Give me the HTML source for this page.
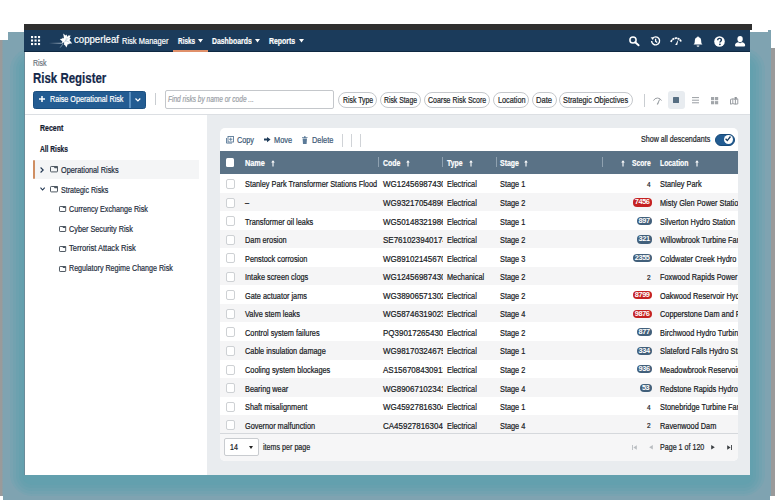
<!DOCTYPE html>
<html><head><meta charset="utf-8">
<style>
html,body{margin:0;padding:0;}
body{width:775px;height:500px;position:relative;overflow:hidden;background:#fff;font-family:"Liberation Sans",sans-serif;}
.abs{position:absolute;}
.t{position:absolute;white-space:nowrap;line-height:1;transform-origin:0 0;-webkit-text-stroke:0.2px currentColor;}
.clip{position:absolute;overflow:hidden;}
.cb{width:7.6px;height:8px;border:1px solid #ced1d4;border-radius:2px;background:#fff;}
.badge{height:8.2px;border-radius:4.1px;color:#fff;font-size:7.4px;line-height:8.4px;text-align:center;letter-spacing:-0.45px;font-weight:700;}
.chip{position:absolute;top:91.6px;height:14.2px;border:1px solid #c5c8cc;border-radius:8px;background:#fff;}
svg{position:absolute;overflow:visible;}
</style></head><body>
<!-- background frames -->
<div class="abs" style="left:0;top:40px;width:4px;height:456px;background:linear-gradient(90deg,#9a9a9a 0,#9a9a9a 1.5px,#7fa3b1 3.5px)"></div>
<div class="abs" style="left:769px;top:48px;width:6px;height:448px;background:linear-gradient(90deg,#7fa3b1 0,#7fa3b1 1.5px,#9a9a9a 2.5px)"></div>
<div class="abs" style="left:3px;top:40px;width:767px;height:460px;background:#7fa3b1"></div>
<div class="abs" style="left:8px;top:32px;width:761px;height:20px;background:#7fa3b1"></div>
<div class="abs" style="left:768px;top:30px;width:3px;height:460px;background:#7fa3b1"></div>
<div class="abs" style="left:10px;top:48px;width:755px;height:448px;border-radius:22px;background:#78a3b1"></div>
<div class="abs" style="left:13px;top:51px;width:749px;height:443px;border-radius:19px;background:#72a2b0"></div>
<div class="abs" style="left:16px;top:54px;width:743px;height:437px;border-radius:16px;background:#6ca1af"></div>
<div class="abs" style="left:19px;top:57px;width:737px;height:431px;border-radius:13px;background:#67a0ae"></div>
<div class="abs" style="left:22px;top:60px;width:731px;height:425px;border-radius:10px;background:#63a0ae"></div>

<!-- window -->
<div class="abs" style="left:24px;top:24px;width:728px;height:6px;background:#2f2f2f"></div>
<div class="abs" style="left:24px;top:30px;width:726px;height:21px;background:#1b3b5b;border-bottom:1px solid #0e2842"></div>
<div class="abs" style="left:25px;top:52px;width:725px;height:423px;background:#fff"></div>
<div class="abs" style="left:24px;top:52px;width:1px;height:423px;background:#6a8c9a"></div>
<!-- orange underline -->
<div class="abs" style="left:173px;top:50px;width:35px;height:2px;background:#e0906a"></div>

<!-- grid icon -->
<svg style="left:31px;top:36px" width="9.1" height="9.1" viewBox="0 0 9.1 9.1" fill="#fff"><rect x="0" y="0" width="2.1" height="2.1"/><rect x="3.5" y="0" width="2.1" height="2.1"/><rect x="7" y="0" width="2.1" height="2.1"/><rect x="0" y="3.5" width="2.1" height="2.1"/><rect x="3.5" y="3.5" width="2.1" height="2.1"/><rect x="7" y="3.5" width="2.1" height="2.1"/><rect x="0" y="7" width="2.1" height="2.1"/><rect x="3.5" y="7" width="2.1" height="2.1"/><rect x="7" y="7" width="2.1" height="2.1"/></svg>
<!-- logo leaf -->
<svg style="left:48px;top:31px" width="26" height="18" viewBox="0 0 26 18">
<defs><linearGradient id="sw" x1="0" x2="1"><stop offset="0" stop-color="#fff" stop-opacity="0"/><stop offset="1" stop-color="#cfe0ee" stop-opacity="0.95"/></linearGradient></defs>
<rect x="1" y="11.8" width="14.4" height="0.8" fill="url(#sw)"/>
<path fill="#fff" d="M22.6 4.6 L21.6 6.8 L23.0 7.6 L21.4 9.0 L24.2 12.6 L21.6 12.4 L20.8 13.6 L20.0 12.8 L18.4 16.6 L17.2 14.4 L16.0 13.4 L15.2 12.0 L13.8 11.8 L14.4 10.6 L11.8 8.0 L14.2 7.8 L14.6 6.8 L16.0 7.6 L15.2 2.6 L17.6 4.4 L18.8 3.6 L19.0 6.0 L20.2 4.4Z"/>
<path stroke="#9fb6c8" stroke-width="0.5" fill="none" d="M15.4 12.2 L20.2 7.2 M17.2 10.6 L18.6 6.8 M17.8 9.8 L21.2 11.2"/>
<path stroke="#8fa9bf" stroke-width="0.7" fill="none" d="M15 13 L12.2 16.6"/>
<circle cx="15.4" cy="12.2" r="0.8" fill="#1b3b5b"/>
</svg>
<!-- nav triangles -->
<svg style="left:198px;top:39.3px" width="5" height="3.4" viewBox="0 0 5 3.4"><path d="M0 0H5L2.5 3.4Z" fill="#fff"/></svg>
<svg style="left:255.4px;top:39.3px" width="5" height="3.4" viewBox="0 0 5 3.4"><path d="M0 0H5L2.5 3.4Z" fill="#fff"/></svg>
<svg style="left:298.7px;top:39.3px" width="5" height="3.4" viewBox="0 0 5 3.4"><path d="M0 0H5L2.5 3.4Z" fill="#fff"/></svg>

<!-- header right icons -->
<svg style="left:628.5px;top:36.3px" width="10.5" height="10" viewBox="0 0 10.5 10"><circle cx="4" cy="4" r="3.1" stroke="#fff" stroke-width="1.5" fill="none"/><path d="M6.2 6.2 L9.6 9.3" stroke="#fff" stroke-width="1.9" stroke-linecap="round"/></svg>
<svg style="left:650px;top:36px" width="11" height="10" viewBox="0 0 11 10"><path d="M1.6 5 A4 4 0 1 0 2.6 2.2" stroke="#fff" stroke-width="1.4" fill="none"/><path d="M0.6 1.2 L3.6 1.4 L3 4.2 Z" fill="#fff"/><path d="M5.6 2.8 V5.2 L7.2 6.6" stroke="#fff" stroke-width="1.3" fill="none"/></svg>
<svg style="left:670.3px;top:37px" width="12.2" height="8" viewBox="0 0 12.2 8"><path d="M1 5 A5.3 5.3 0 0 1 11.2 5" stroke="#fff" stroke-width="1.7" fill="none" stroke-dasharray="2.2 0.5"/><path d="M5.2 7.9 L8.4 2.6 L7.2 7.9 Z" fill="#fff"/></svg>
<svg style="left:693px;top:35.5px" width="10" height="11" viewBox="0 0 10 11"><path d="M5 0.4 C5.6 0.4 5.8 0.9 5.8 1.2 C7.6 1.6 8.2 3 8.2 5 C8.2 7 8.6 7.6 9.6 8.6 H0.4 C1.4 7.6 1.8 7 1.8 5 C1.8 3 2.4 1.6 4.2 1.2 C4.2 0.9 4.4 0.4 5 0.4Z" fill="#fff"/><path d="M3.6 9.4 A1.4 1.4 0 0 0 6.4 9.4Z" fill="#fff"/></svg>
<svg style="left:713.5px;top:35.8px" width="11" height="11" viewBox="0 0 11 11"><circle cx="5.5" cy="5.5" r="5.3" fill="#fff"/><path d="M3.7 4.2 C3.7 2.9 4.5 2.4 5.5 2.4 C6.6 2.4 7.4 3 7.4 4 C7.4 5.2 5.9 5.3 5.9 6.6" stroke="#1b3b5b" stroke-width="1.4" fill="none"/><circle cx="5.9" cy="8.3" r="0.9" fill="#1b3b5b"/></svg>
<svg style="left:735.4px;top:35.8px" width="10.2" height="10.4" viewBox="0 0 10.2 10.4"><ellipse cx="5.1" cy="3.1" rx="2.7" ry="3.1" fill="#fff"/><path d="M0 9.2 C0 7.4 1.6 6.6 3.2 6.3 L5.1 7.2 L7 6.3 C8.6 6.6 10.2 7.4 10.2 9.2 Q10.2 10.4 9 10.4 H1.2 Q0 10.4 0 9.2Z" fill="#fff"/></svg>

<!-- Raise button -->
<div class="abs" style="left:33px;top:90.5px;width:111.4px;height:16px;background:#235c92;border:1px solid #1a4f80;border-radius:2.5px"></div>
<div class="abs" style="left:129px;top:91.5px;width:1.6px;height:16px;background:#5a8fbf"></div>
<svg style="left:38.5px;top:96px" width="6" height="6" viewBox="0 0 6 6"><path d="M3 0V6M0 3H6" stroke="#fff" stroke-width="1.5"/></svg>
<svg style="left:135.3px;top:97.7px" width="5.8" height="3.6" viewBox="0 0 5.8 3.6"><path d="M0.5 0.5L2.9 3L5.3 0.5" stroke="#fff" stroke-width="1.2" fill="none"/></svg>
<div class="abs" style="left:155px;top:93px;width:1px;height:12px;background:#c9cdd1"></div>
<!-- search input -->
<div class="abs" style="left:164.5px;top:90.2px;width:167.6px;height:16.6px;border:1px solid #c4c7cb;border-radius:2px;background:#fff"></div>
<!-- chips -->
<div class="chip" style="left:338.1px;width:36.8px"></div>
<div class="chip" style="left:380px;width:38.7px"></div>
<div class="chip" style="left:423.8px;width:64.6px"></div>
<div class="chip" style="left:493.1px;width:34.2px"></div>
<div class="chip" style="left:532px;width:22.5px"></div>
<div class="chip" style="left:558.8px;width:72.2px"></div>
<div class="abs" style="left:644px;top:93.7px;width:1px;height:13.2px;background:#c9cdd1"></div>
<!-- view icons -->
<svg style="left:652.8px;top:96.6px" width="9" height="7.4" viewBox="0 0 9 7.4"><path d="M0.5 3.6 A4.4 4.4 0 0 1 8.5 3.6" stroke="#8e9398" stroke-width="0.9" fill="none"/><path d="M4.1 7.2 L6.6 2.4 L4.9 7.3Z" fill="#8e9398" stroke="#8e9398" stroke-width="0.5"/></svg>
<div class="abs" style="left:668px;top:91.1px;width:16.8px;height:18.4px;background:#e8ecf0;border-radius:3px"></div>
<div class="abs" style="left:673.1px;top:96.9px;width:6.4px;height:6.4px;background:#566e82;border-radius:0.5px"></div>
<svg style="left:692px;top:97.4px" width="7" height="6.4" viewBox="0 0 7 6.4"><path d="M0 0.6H7M0 3.2H7M0 5.8H7" stroke="#9a9ea3" stroke-width="1"/></svg>
<svg style="left:711px;top:96.8px" width="7.2" height="7.3" viewBox="0 0 7.2 7.3" fill="#a2a6aa"><rect x="0" y="0" width="3.2" height="3.2"/><rect x="4" y="0" width="3.2" height="3.2"/><rect x="0" y="4.1" width="3.2" height="3.2"/><rect x="4" y="4.1" width="3.2" height="3.2"/></svg>
<svg style="left:729.7px;top:96.6px" width="8.3" height="7.6" viewBox="0 0 8.3 7.6"><path d="M0.5 2.4 L2.8 1.8 L5.4 2.4 L7.8 1.8 V6.9 L5.4 7.2 L2.8 6.6 L0.5 7.2 Z M2.8 1.8V6.6 M5.4 2.4V7.2" stroke="#8e9398" stroke-width="0.9" fill="none"/><path d="M4.6 0 H6.8 V2.6 L5.7 1.9 L4.6 2.6Z" fill="#8e9398"/></svg>

<!-- body divider & panel -->
<div class="abs" style="left:25px;top:113.5px;width:725px;height:1px;background:#dcdfe3"></div>
<div class="abs" style="left:207px;top:114.5px;width:543px;height:360.5px;background:#e9ecef"></div>

<!-- sidebar -->
<div class="abs" style="left:34.8px;top:160.2px;width:164.2px;height:18.4px;background:#f4f5f6"></div>
<div class="abs" style="left:32.8px;top:160.2px;width:2px;height:18.4px;background:#cf8e62;border-radius:1px"></div>
<svg style="left:40.4px;top:166.6px" width="4" height="6" viewBox="0 0 4 6"><path d="M0.6 0.5L3.2 3L0.6 5.5" stroke="#1f3550" stroke-width="1.1" fill="none"/></svg>
<svg style="left:40px;top:187.4px" width="5.2" height="3.6" viewBox="0 0 5.2 3.6"><path d="M0.5 0.6L2.6 3L4.7 0.6" stroke="#1f3550" stroke-width="1.1" fill="none"/></svg>
<svg style="left:50px;top:166.4px" width="8" height="6.4" viewBox="0 0 8 6.4"><path d="M0.5 1.2Q0.5 0.5 1.2 0.5H7.5V5.4Q7.5 5.9 7 5.9H1.2Q0.5 5.9 0.5 5.2Z" stroke="#4f5963" stroke-width="1" fill="none"/><path d="M3.6 0.4H7.6V2.2H4.6Z" fill="#4f5963"/></svg>
<svg style="left:50px;top:186.2px" width="8" height="6.4" viewBox="0 0 8 6.4"><path d="M0.5 1.2Q0.5 0.5 1.2 0.5H7.5V5.4Q7.5 5.9 7 5.9H1.2Q0.5 5.9 0.5 5.2Z" stroke="#4f5963" stroke-width="1" fill="none"/><path d="M3.6 0.4H7.6V2.2H4.6Z" fill="#4f5963"/></svg>
<svg style="left:58.8px;top:206.3px" width="7.2" height="6" viewBox="0 0 7.2 6"><path d="M0.5 1.1Q0.5 0.5 1.1 0.5H6.7V5Q6.7 5.5 6.2 5.5H1.1Q0.5 5.5 0.5 4.9Z" stroke="#4f5963" stroke-width="1" fill="none"/><path d="M3.2 0.4H6.8V2H4.1Z" fill="#4f5963"/></svg>
<svg style="left:58.8px;top:226px" width="7.2" height="6" viewBox="0 0 7.2 6"><path d="M0.5 1.1Q0.5 0.5 1.1 0.5H6.7V5Q6.7 5.5 6.2 5.5H1.1Q0.5 5.5 0.5 4.9Z" stroke="#4f5963" stroke-width="1" fill="none"/><path d="M3.2 0.4H6.8V2H4.1Z" fill="#4f5963"/></svg>
<svg style="left:58.8px;top:245.8px" width="7.2" height="6" viewBox="0 0 7.2 6"><path d="M0.5 1.1Q0.5 0.5 1.1 0.5H6.7V5Q6.7 5.5 6.2 5.5H1.1Q0.5 5.5 0.5 4.9Z" stroke="#4f5963" stroke-width="1" fill="none"/><path d="M3.2 0.4H6.8V2H4.1Z" fill="#4f5963"/></svg>
<svg style="left:58.8px;top:265.5px" width="7.2" height="6" viewBox="0 0 7.2 6"><path d="M0.5 1.1Q0.5 0.5 1.1 0.5H6.7V5Q6.7 5.5 6.2 5.5H1.1Q0.5 5.5 0.5 4.9Z" stroke="#4f5963" stroke-width="1" fill="none"/><path d="M3.2 0.4H6.8V2H4.1Z" fill="#4f5963"/></svg>

<!-- card -->
<div class="abs" style="left:220px;top:127.8px;width:518px;height:333.4px;background:#fff;border-radius:5px;overflow:hidden">
  <div class="abs" style="left:0;top:305.2px;width:518px;height:28.2px;background:#f6f6f7"></div>
</div>
<!-- toolbar icons -->
<svg style="left:226.2px;top:136.2px" width="8" height="7.6" viewBox="0 0 8 7.6"><rect x="2" y="0.5" width="5.5" height="5.5" stroke="#5b7a98" stroke-width="0.9" fill="none"/><path d="M0.5 2V7.1H6" stroke="#5b7a98" stroke-width="0.9" fill="none"/><path d="M4.75 1.6V4.9M3.1 3.25H6.4" stroke="#5b7a98" stroke-width="0.9"/></svg>
<svg style="left:263.8px;top:137.4px" width="6.6" height="5.2" viewBox="0 0 6.6 5.2"><path d="M0 1.6H3V0L6.6 2.6L3 5.2V3.6H0Z" fill="#1f3c5a"/></svg>
<svg style="left:302px;top:136px" width="5.6" height="8" viewBox="0 0 5.6 8"><path d="M0 1.2H5.6V2H0Z M2 0.2H3.6V1.2H2Z M0.6 2.4H5L4.6 8H1Z" fill="#5b7a98"/></svg>
<div class="abs" style="left:342px;top:133.7px;width:1px;height:13px;background:#d0d3d7"></div>
<div class="abs" style="left:351px;top:133.7px;width:1px;height:13px;background:#d0d3d7"></div>
<div class="abs" style="left:360px;top:133.7px;width:1px;height:13px;background:#d0d3d7"></div>
<!-- toggle -->
<div class="abs" style="left:714.5px;top:133.5px;width:18px;height:10.8px;background:#225c92;border:0.6px solid #174a7a;border-radius:6px"></div>
<div class="abs" style="left:723.6px;top:134.5px;width:9.4px;height:9.4px;background:#fff;border-radius:50%"></div>
<svg style="left:725.4px;top:136.4px" width="6" height="5.4" viewBox="0 0 6 5.4"><path d="M0.6 2.8L2.3 4.6L5.5 0.5" stroke="#173a5e" stroke-width="1.3" fill="none"/></svg>

<!-- table header -->
<div class="abs" style="left:220px;top:151.2px;width:518px;height:22.8px;background:#5a7286"></div>
<div class="abs" style="left:225.7px;top:158.4px;width:8.8px;height:9px;background:#fff;border-radius:1.5px"></div>
<div class="abs" style="left:378px;top:157px;width:1px;height:10px;background:#8fa1b0"></div>
<div class="abs" style="left:442px;top:157px;width:1px;height:10px;background:#8fa1b0"></div>
<div class="abs" style="left:495.5px;top:157px;width:1px;height:10px;background:#8fa1b0"></div>
<div class="abs" style="left:601.5px;top:157px;width:1px;height:10px;background:#8fa1b0"></div>
<svg style="left:270.6px;top:159.6px" width="4" height="6.4" viewBox="0 0 4 6.4"><path d="M2 6.6V2" stroke="#fff" stroke-width="1.1"/><path d="M0.2 2.6L2 0.2L3.8 2.6Z" fill="#fff"/></svg>
<svg style="left:406.4px;top:159.6px" width="4" height="6.4" viewBox="0 0 4 6.4"><path d="M2 6.6V2" stroke="#fff" stroke-width="1.1"/><path d="M0.2 2.6L2 0.2L3.8 2.6Z" fill="#fff"/></svg>
<svg style="left:468.6px;top:159.6px" width="4" height="6.4" viewBox="0 0 4 6.4"><path d="M2 6.6V2" stroke="#fff" stroke-width="1.1"/><path d="M0.2 2.6L2 0.2L3.8 2.6Z" fill="#fff"/></svg>
<svg style="left:524px;top:159.6px" width="4" height="6.4" viewBox="0 0 4 6.4"><path d="M2 6.6V2" stroke="#fff" stroke-width="1.1"/><path d="M0.2 2.6L2 0.2L3.8 2.6Z" fill="#fff"/></svg>
<svg style="left:621.4px;top:159.6px" width="4" height="6.4" viewBox="0 0 4 6.4"><path d="M2 6.6V2" stroke="#fff" stroke-width="1.1"/><path d="M0.2 2.6L2 0.2L3.8 2.6Z" fill="#fff"/></svg>
<svg style="left:694.6px;top:159.6px" width="4" height="6.4" viewBox="0 0 4 6.4"><path d="M2 6.6V2" stroke="#fff" stroke-width="1.1"/><path d="M0.2 2.6L2 0.2L3.8 2.6Z" fill="#fff"/></svg>

<!-- rows -->
<div class="abs" style="left:220px;top:174.00px;width:518px;height:18.65px;background:#ffffff"></div>
<div class="abs cb" style="left:225.5px;top:179.00px;"></div>
<div class="abs" style="left:220px;top:192.55px;width:518px;height:18.65px;background:#f5f5f6"></div>
<div class="abs cb" style="left:225.5px;top:197.55px;"></div>
<div class="abs" style="left:220px;top:211.10px;width:518px;height:18.65px;background:#ffffff"></div>
<div class="abs cb" style="left:225.5px;top:216.10px;"></div>
<div class="abs" style="left:220px;top:229.65px;width:518px;height:18.65px;background:#f5f5f6"></div>
<div class="abs cb" style="left:225.5px;top:234.65px;"></div>
<div class="abs" style="left:220px;top:248.20px;width:518px;height:18.65px;background:#ffffff"></div>
<div class="abs cb" style="left:225.5px;top:253.20px;"></div>
<div class="abs" style="left:220px;top:266.75px;width:518px;height:18.65px;background:#f5f5f6"></div>
<div class="abs cb" style="left:225.5px;top:271.75px;"></div>
<div class="abs" style="left:220px;top:285.30px;width:518px;height:18.65px;background:#ffffff"></div>
<div class="abs cb" style="left:225.5px;top:290.30px;"></div>
<div class="abs" style="left:220px;top:303.85px;width:518px;height:18.65px;background:#f5f5f6"></div>
<div class="abs cb" style="left:225.5px;top:308.85px;"></div>
<div class="abs" style="left:220px;top:322.40px;width:518px;height:18.65px;background:#ffffff"></div>
<div class="abs cb" style="left:225.5px;top:327.40px;"></div>
<div class="abs" style="left:220px;top:340.95px;width:518px;height:18.65px;background:#f5f5f6"></div>
<div class="abs cb" style="left:225.5px;top:345.95px;"></div>
<div class="abs" style="left:220px;top:359.50px;width:518px;height:18.65px;background:#ffffff"></div>
<div class="abs cb" style="left:225.5px;top:364.50px;"></div>
<div class="abs" style="left:220px;top:378.05px;width:518px;height:18.65px;background:#f5f5f6"></div>
<div class="abs cb" style="left:225.5px;top:383.05px;"></div>
<div class="abs" style="left:220px;top:396.60px;width:518px;height:18.65px;background:#ffffff"></div>
<div class="abs cb" style="left:225.5px;top:401.60px;"></div>
<div class="abs" style="left:220px;top:415.15px;width:518px;height:18.65px;background:#f5f5f6"></div>
<div class="abs cb" style="left:225.5px;top:420.15px;"></div>
<div class="abs" style="left:220px;top:432.6px;width:518px;height:1px;background:#d5d8dc"></div>
<div class="abs badge" style="left:632.8px;top:198.35px;width:18.8px;background:#c52222">7456</div>
<div class="abs badge" style="left:636.6px;top:216.90px;width:15px;background:#42607b">897</div>
<div class="abs badge" style="left:636.6px;top:235.45px;width:15px;background:#42607b">321</div>
<div class="abs badge" style="left:632.8px;top:254.00px;width:18.8px;background:#42607b">2355</div>
<div class="abs badge" style="left:632.8px;top:291.10px;width:18.8px;background:#c52222">8799</div>
<div class="abs badge" style="left:632.8px;top:309.65px;width:18.8px;background:#c52222">9876</div>
<div class="abs badge" style="left:636.6px;top:328.20px;width:15px;background:#42607b">877</div>
<div class="abs badge" style="left:636.6px;top:346.75px;width:15px;background:#42607b">334</div>
<div class="abs badge" style="left:636.6px;top:365.30px;width:15px;background:#42607b">936</div>
<div class="abs badge" style="left:639.6px;top:383.85px;width:12px;background:#42607b">53</div>

<!-- footer -->
<div class="abs" style="left:224.4px;top:437.9px;width:32.3px;height:16.4px;background:#fff;border:1px solid #c9ccd0;border-radius:2px"></div>
<svg style="left:248.9px;top:445.6px" width="4" height="3" viewBox="0 0 4 3"><path d="M0 0H4L2 3Z" fill="#222"/></svg>
<svg style="left:631.7px;top:445px" width="5" height="5" viewBox="0 0 5 5"><path d="M0.5 0V5" stroke="#b9bdc1" stroke-width="0.9"/><path d="M4.8 0.3V4.7L1.4 2.5Z" fill="#b9bdc1"/></svg>
<svg style="left:649.4px;top:445.2px" width="4" height="4.6" viewBox="0 0 4 4.6"><path d="M3.8 0V4.6L0.2 2.3Z" fill="#b9bdc1"/></svg>
<svg style="left:710.8px;top:445.2px" width="4" height="4.6" viewBox="0 0 4 4.6"><path d="M0.2 0V4.6L3.8 2.3Z" fill="#3a3e42"/></svg>
<svg style="left:727.2px;top:445px" width="5" height="5" viewBox="0 0 5 5"><path d="M0.2 0.3V4.7L3.6 2.5Z" fill="#3a3e42"/><path d="M4.5 0V5" stroke="#3a3e42" stroke-width="0.9"/></svg>

<span class="t" style="left:73.90px;top:34.78px;font-size:10.3px;color:#fff;transform:scaleX(0.9338);">copperleaf</span>
<span class="t" style="left:121.60px;top:36.52px;font-size:8.6px;color:#fff;transform:scaleX(0.8752);">Risk Manager</span>
<span class="t" style="left:177.70px;top:36.52px;font-size:8.6px;color:#fff;transform:scaleX(0.7457);font-weight:700;">Risks</span>
<span class="t" style="left:212.10px;top:36.52px;font-size:8.6px;color:#fff;transform:scaleX(0.7993);font-weight:700;">Dashboards</span>
<span class="t" style="left:268.90px;top:36.52px;font-size:8.6px;color:#fff;transform:scaleX(0.8069);font-weight:700;">Reports</span>
<span class="t" style="left:32.80px;top:58.72px;font-size:8.6px;color:#6a737d;transform:scaleX(0.8139);">Risk</span>
<span class="t" style="left:33.30px;top:70.85px;font-size:14.0px;color:#14284a;transform:scaleX(0.8192);font-weight:700;">Risk Register</span>
<span class="t" style="left:49.80px;top:95.39px;font-size:8.4px;color:#fff;transform:scaleX(0.8570);">Raise Operational Risk</span>
<span class="t" style="left:168.40px;top:96.06px;font-size:8.2px;color:#9aa0a6;transform:scaleX(0.7990);font-style:italic;">Find risks by name or code ...</span>
<span class="t" style="left:342.60px;top:95.79px;font-size:8.4px;color:#222629;transform:scaleX(0.8214);">Risk Type</span>
<span class="t" style="left:384.00px;top:95.79px;font-size:8.4px;color:#222629;transform:scaleX(0.8149);">Risk Stage</span>
<span class="t" style="left:428.00px;top:95.79px;font-size:8.4px;color:#222629;transform:scaleX(0.8336);">Coarse Risk Score</span>
<span class="t" style="left:497.60px;top:95.79px;font-size:8.4px;color:#222629;transform:scaleX(0.8685);">Location</span>
<span class="t" style="left:535.90px;top:95.79px;font-size:8.4px;color:#222629;transform:scaleX(0.9101);">Date</span>
<span class="t" style="left:563.30px;top:95.79px;font-size:8.4px;color:#222629;transform:scaleX(0.8741);">Strategic Objectives</span>
<span class="t" style="left:39.50px;top:123.59px;font-size:8.4px;color:#152030;transform:scaleX(0.8308);font-weight:700;">Recent</span>
<span class="t" style="left:39.50px;top:144.79px;font-size:8.4px;color:#152030;transform:scaleX(0.7886);font-weight:700;">All Risks</span>
<span class="t" style="left:60.60px;top:165.79px;font-size:8.4px;color:#1f2e3e;transform:scaleX(0.8715);">Operational Risks</span>
<span class="t" style="left:60.60px;top:185.69px;font-size:8.4px;color:#1f2e3e;transform:scaleX(0.8469);">Strategic Risks</span>
<span class="t" style="left:68.60px;top:204.79px;font-size:8.4px;color:#1f2e3e;transform:scaleX(0.8550);">Currency Exchange Risk</span>
<span class="t" style="left:68.60px;top:224.54px;font-size:8.4px;color:#1f2e3e;transform:scaleX(0.8677);">Cyber Security Risk</span>
<span class="t" style="left:68.60px;top:244.29px;font-size:8.4px;color:#1f2e3e;transform:scaleX(0.9012);">Terrorist Attack Risk</span>
<span class="t" style="left:68.60px;top:264.04px;font-size:8.4px;color:#1f2e3e;transform:scaleX(0.8511);">Regulatory Regime Change Risk</span>
<span class="t" style="left:236.70px;top:135.69px;font-size:8.4px;color:#3b5876;transform:scaleX(0.8695);">Copy</span>
<span class="t" style="left:273.90px;top:135.69px;font-size:8.4px;color:#3b5876;transform:scaleX(0.8838);">Move</span>
<span class="t" style="left:311.60px;top:135.69px;font-size:8.4px;color:#3b5876;transform:scaleX(0.8840);">Delete</span>
<span class="t" style="left:640.50px;top:136.06px;font-size:8.2px;color:#222629;transform:scaleX(0.8688);">Show all descendants</span>
<span class="t" style="left:244.50px;top:159.09px;font-size:8.4px;color:#fff;transform:scaleX(0.8724);font-weight:700;">Name</span>
<span class="t" style="left:382.90px;top:159.09px;font-size:8.4px;color:#fff;transform:scaleX(0.8263);font-weight:700;">Code</span>
<span class="t" style="left:446.90px;top:159.09px;font-size:8.4px;color:#fff;transform:scaleX(0.8190);font-weight:700;">Type</span>
<span class="t" style="left:499.50px;top:159.09px;font-size:8.4px;color:#fff;transform:scaleX(0.8287);font-weight:700;">Stage</span>
<span class="t" style="left:631.70px;top:159.09px;font-size:8.4px;color:#fff;transform:scaleX(0.7991);font-weight:700;">Score</span>
<span class="t" style="left:659.90px;top:159.09px;font-size:8.4px;color:#fff;transform:scaleX(0.8139);font-weight:700;">Location</span>
<div class="clip" style="left:244px;top:180.49px;width:134px;height:10.9px;"><span class="t" style="left:0.60px;top:0px;font-size:8.4px;color:#15181c;transform:scaleX(0.8760);">Stanley Park Transformer Stations Flood Risk</span></div>
<div class="clip" style="left:382px;top:180.49px;width:60.5px;height:10.9px;"><span class="t" style="left:0.90px;top:0px;font-size:8.4px;color:#15181c;transform:scaleX(0.9520);">WG12456987430</span></div>
<span class="t" style="left:447.00px;top:180.49px;font-size:8.4px;color:#15181c;transform:scaleX(0.8760);">Electrical</span>
<span class="t" style="left:499.60px;top:180.49px;font-size:8.4px;color:#15181c;transform:scaleX(0.8760);">Stage 1</span>
<div class="clip" style="left:659px;top:180.49px;width:79px;height:10.9px;"><span class="t" style="left:0.90px;top:0px;font-size:8.4px;color:#15181c;transform:scaleX(0.8760);">Stanley Park</span></div>
<span class="t" style="left:647.40px;top:181.14px;font-size:7.4px;color:#15181c;transform:scaleX(0.8760);">4</span>
<div class="clip" style="left:244px;top:199.04px;width:134px;height:10.9px;"><span class="t" style="left:0.60px;top:0px;font-size:8.4px;color:#15181c;transform:scaleX(0.8760);">–</span></div>
<div class="clip" style="left:382px;top:199.04px;width:60.5px;height:10.9px;"><span class="t" style="left:0.90px;top:0px;font-size:8.4px;color:#15181c;transform:scaleX(0.9520);">WG93217054896</span></div>
<span class="t" style="left:447.00px;top:199.04px;font-size:8.4px;color:#15181c;transform:scaleX(0.8760);">Electrical</span>
<span class="t" style="left:499.60px;top:199.04px;font-size:8.4px;color:#15181c;transform:scaleX(0.8760);">Stage 2</span>
<div class="clip" style="left:659px;top:199.04px;width:79px;height:10.9px;"><span class="t" style="left:0.90px;top:0px;font-size:8.4px;color:#15181c;transform:scaleX(0.8760);">Misty Glen Power Station</span></div>
<div class="clip" style="left:244px;top:217.59px;width:134px;height:10.9px;"><span class="t" style="left:0.60px;top:0px;font-size:8.4px;color:#15181c;transform:scaleX(0.8760);">Transformer oil leaks</span></div>
<div class="clip" style="left:382px;top:217.59px;width:60.5px;height:10.9px;"><span class="t" style="left:0.90px;top:0px;font-size:8.4px;color:#15181c;transform:scaleX(0.9520);">WG50148321986</span></div>
<span class="t" style="left:447.00px;top:217.59px;font-size:8.4px;color:#15181c;transform:scaleX(0.8760);">Electrical</span>
<span class="t" style="left:499.60px;top:217.59px;font-size:8.4px;color:#15181c;transform:scaleX(0.8760);">Stage 1</span>
<div class="clip" style="left:659px;top:217.59px;width:79px;height:10.9px;"><span class="t" style="left:0.90px;top:0px;font-size:8.4px;color:#15181c;transform:scaleX(0.8760);">Silverton Hydro Station</span></div>
<div class="clip" style="left:244px;top:236.14px;width:134px;height:10.9px;"><span class="t" style="left:0.60px;top:0px;font-size:8.4px;color:#15181c;transform:scaleX(0.8760);">Dam erosion</span></div>
<div class="clip" style="left:382px;top:236.14px;width:60.5px;height:10.9px;"><span class="t" style="left:0.90px;top:0px;font-size:8.4px;color:#15181c;transform:scaleX(0.9520);">SE761023940174</span></div>
<span class="t" style="left:447.00px;top:236.14px;font-size:8.4px;color:#15181c;transform:scaleX(0.8760);">Electrical</span>
<span class="t" style="left:499.60px;top:236.14px;font-size:8.4px;color:#15181c;transform:scaleX(0.8760);">Stage 2</span>
<div class="clip" style="left:659px;top:236.14px;width:79px;height:10.9px;"><span class="t" style="left:0.90px;top:0px;font-size:8.4px;color:#15181c;transform:scaleX(0.8760);">Willowbrook Turbine Farm</span></div>
<div class="clip" style="left:244px;top:254.69px;width:134px;height:10.9px;"><span class="t" style="left:0.60px;top:0px;font-size:8.4px;color:#15181c;transform:scaleX(0.8760);">Penstock corrosion</span></div>
<div class="clip" style="left:382px;top:254.69px;width:60.5px;height:10.9px;"><span class="t" style="left:0.90px;top:0px;font-size:8.4px;color:#15181c;transform:scaleX(0.9520);">WG89102145670</span></div>
<span class="t" style="left:447.00px;top:254.69px;font-size:8.4px;color:#15181c;transform:scaleX(0.8760);">Electrical</span>
<span class="t" style="left:499.60px;top:254.69px;font-size:8.4px;color:#15181c;transform:scaleX(0.8760);">Stage 3</span>
<div class="clip" style="left:659px;top:254.69px;width:79px;height:10.9px;"><span class="t" style="left:0.90px;top:0px;font-size:8.4px;color:#15181c;transform:scaleX(0.8760);">Coldwater Creek Hydro</span></div>
<div class="clip" style="left:244px;top:273.24px;width:134px;height:10.9px;"><span class="t" style="left:0.60px;top:0px;font-size:8.4px;color:#15181c;transform:scaleX(0.8760);">Intake screen clogs</span></div>
<div class="clip" style="left:382px;top:273.24px;width:60.5px;height:10.9px;"><span class="t" style="left:0.90px;top:0px;font-size:8.4px;color:#15181c;transform:scaleX(0.9520);">WG12456987430</span></div>
<span class="t" style="left:447.00px;top:273.24px;font-size:8.4px;color:#15181c;transform:scaleX(0.8760);">Mechanical</span>
<span class="t" style="left:499.60px;top:273.24px;font-size:8.4px;color:#15181c;transform:scaleX(0.8760);">Stage 2</span>
<div class="clip" style="left:659px;top:273.24px;width:79px;height:10.9px;"><span class="t" style="left:0.90px;top:0px;font-size:8.4px;color:#15181c;transform:scaleX(0.8760);">Foxwood Rapids Power Station</span></div>
<span class="t" style="left:647.40px;top:273.89px;font-size:7.4px;color:#15181c;transform:scaleX(0.8760);">2</span>
<div class="clip" style="left:244px;top:291.79px;width:134px;height:10.9px;"><span class="t" style="left:0.60px;top:0px;font-size:8.4px;color:#15181c;transform:scaleX(0.8760);">Gate actuator jams</span></div>
<div class="clip" style="left:382px;top:291.79px;width:60.5px;height:10.9px;"><span class="t" style="left:0.90px;top:0px;font-size:8.4px;color:#15181c;transform:scaleX(0.9520);">WG38906571302</span></div>
<span class="t" style="left:447.00px;top:291.79px;font-size:8.4px;color:#15181c;transform:scaleX(0.8760);">Electrical</span>
<span class="t" style="left:499.60px;top:291.79px;font-size:8.4px;color:#15181c;transform:scaleX(0.8760);">Stage 2</span>
<div class="clip" style="left:659px;top:291.79px;width:79px;height:10.9px;"><span class="t" style="left:0.90px;top:0px;font-size:8.4px;color:#15181c;transform:scaleX(0.8760);">Oakwood Reservoir Hydro</span></div>
<div class="clip" style="left:244px;top:310.34px;width:134px;height:10.9px;"><span class="t" style="left:0.60px;top:0px;font-size:8.4px;color:#15181c;transform:scaleX(0.8760);">Valve stem leaks</span></div>
<div class="clip" style="left:382px;top:310.34px;width:60.5px;height:10.9px;"><span class="t" style="left:0.90px;top:0px;font-size:8.4px;color:#15181c;transform:scaleX(0.9520);">WG58746319023</span></div>
<span class="t" style="left:447.00px;top:310.34px;font-size:8.4px;color:#15181c;transform:scaleX(0.8760);">Electrical</span>
<span class="t" style="left:499.60px;top:310.34px;font-size:8.4px;color:#15181c;transform:scaleX(0.8760);">Stage 4</span>
<div class="clip" style="left:659px;top:310.34px;width:79px;height:10.9px;"><span class="t" style="left:0.90px;top:0px;font-size:8.4px;color:#15181c;transform:scaleX(0.8760);">Copperstone Dam and Power</span></div>
<div class="clip" style="left:244px;top:328.89px;width:134px;height:10.9px;"><span class="t" style="left:0.60px;top:0px;font-size:8.4px;color:#15181c;transform:scaleX(0.8760);">Control system failures</span></div>
<div class="clip" style="left:382px;top:328.89px;width:60.5px;height:10.9px;"><span class="t" style="left:0.90px;top:0px;font-size:8.4px;color:#15181c;transform:scaleX(0.9520);">PQ39017265430</span></div>
<span class="t" style="left:447.00px;top:328.89px;font-size:8.4px;color:#15181c;transform:scaleX(0.8760);">Electrical</span>
<span class="t" style="left:499.60px;top:328.89px;font-size:8.4px;color:#15181c;transform:scaleX(0.8760);">Stage 2</span>
<div class="clip" style="left:659px;top:328.89px;width:79px;height:10.9px;"><span class="t" style="left:0.90px;top:0px;font-size:8.4px;color:#15181c;transform:scaleX(0.8760);">Birchwood Hydro Turbine</span></div>
<div class="clip" style="left:244px;top:347.44px;width:134px;height:10.9px;"><span class="t" style="left:0.60px;top:0px;font-size:8.4px;color:#15181c;transform:scaleX(0.8760);">Cable insulation damage</span></div>
<div class="clip" style="left:382px;top:347.44px;width:60.5px;height:10.9px;"><span class="t" style="left:0.90px;top:0px;font-size:8.4px;color:#15181c;transform:scaleX(0.9520);">WG98170324675</span></div>
<span class="t" style="left:447.00px;top:347.44px;font-size:8.4px;color:#15181c;transform:scaleX(0.8760);">Electrical</span>
<span class="t" style="left:499.60px;top:347.44px;font-size:8.4px;color:#15181c;transform:scaleX(0.8760);">Stage 1</span>
<div class="clip" style="left:659px;top:347.44px;width:79px;height:10.9px;"><span class="t" style="left:0.90px;top:0px;font-size:8.4px;color:#15181c;transform:scaleX(0.8760);">Slateford Falls Hydro Station</span></div>
<div class="clip" style="left:244px;top:365.99px;width:134px;height:10.9px;"><span class="t" style="left:0.60px;top:0px;font-size:8.4px;color:#15181c;transform:scaleX(0.8760);">Cooling system blockages</span></div>
<div class="clip" style="left:382px;top:365.99px;width:60.5px;height:10.9px;"><span class="t" style="left:0.90px;top:0px;font-size:8.4px;color:#15181c;transform:scaleX(0.9520);">AS156708430912</span></div>
<span class="t" style="left:447.00px;top:365.99px;font-size:8.4px;color:#15181c;transform:scaleX(0.8760);">Electrical</span>
<span class="t" style="left:499.60px;top:365.99px;font-size:8.4px;color:#15181c;transform:scaleX(0.8760);">Stage 2</span>
<div class="clip" style="left:659px;top:365.99px;width:79px;height:10.9px;"><span class="t" style="left:0.90px;top:0px;font-size:8.4px;color:#15181c;transform:scaleX(0.8760);">Meadowbrook Reservoir</span></div>
<div class="clip" style="left:244px;top:384.54px;width:134px;height:10.9px;"><span class="t" style="left:0.60px;top:0px;font-size:8.4px;color:#15181c;transform:scaleX(0.8760);">Bearing wear</span></div>
<div class="clip" style="left:382px;top:384.54px;width:60.5px;height:10.9px;"><span class="t" style="left:0.90px;top:0px;font-size:8.4px;color:#15181c;transform:scaleX(0.9520);">WG89067102341</span></div>
<span class="t" style="left:447.00px;top:384.54px;font-size:8.4px;color:#15181c;transform:scaleX(0.8760);">Electrical</span>
<span class="t" style="left:499.60px;top:384.54px;font-size:8.4px;color:#15181c;transform:scaleX(0.8760);">Stage 4</span>
<div class="clip" style="left:659px;top:384.54px;width:79px;height:10.9px;"><span class="t" style="left:0.90px;top:0px;font-size:8.4px;color:#15181c;transform:scaleX(0.8760);">Redstone Rapids Hydro</span></div>
<div class="clip" style="left:244px;top:403.09px;width:134px;height:10.9px;"><span class="t" style="left:0.60px;top:0px;font-size:8.4px;color:#15181c;transform:scaleX(0.8760);">Shaft misalignment</span></div>
<div class="clip" style="left:382px;top:403.09px;width:60.5px;height:10.9px;"><span class="t" style="left:0.90px;top:0px;font-size:8.4px;color:#15181c;transform:scaleX(0.9520);">WG45927816304</span></div>
<span class="t" style="left:447.00px;top:403.09px;font-size:8.4px;color:#15181c;transform:scaleX(0.8760);">Electrical</span>
<span class="t" style="left:499.60px;top:403.09px;font-size:8.4px;color:#15181c;transform:scaleX(0.8760);">Stage 1</span>
<div class="clip" style="left:659px;top:403.09px;width:79px;height:10.9px;"><span class="t" style="left:0.90px;top:0px;font-size:8.4px;color:#15181c;transform:scaleX(0.8760);">Stonebridge Turbine Farm</span></div>
<span class="t" style="left:647.40px;top:403.74px;font-size:7.4px;color:#15181c;transform:scaleX(0.8760);">4</span>
<div class="clip" style="left:244px;top:421.64px;width:134px;height:10.9px;"><span class="t" style="left:0.60px;top:0px;font-size:8.4px;color:#15181c;transform:scaleX(0.8760);">Governor malfunction</span></div>
<div class="clip" style="left:382px;top:421.64px;width:60.5px;height:10.9px;"><span class="t" style="left:0.90px;top:0px;font-size:8.4px;color:#15181c;transform:scaleX(0.9520);">CA45927816304</span></div>
<span class="t" style="left:447.00px;top:421.64px;font-size:8.4px;color:#15181c;transform:scaleX(0.8760);">Electrical</span>
<span class="t" style="left:499.60px;top:421.64px;font-size:8.4px;color:#15181c;transform:scaleX(0.8760);">Stage 4</span>
<div class="clip" style="left:659px;top:421.64px;width:79px;height:10.9px;"><span class="t" style="left:0.90px;top:0px;font-size:8.4px;color:#15181c;transform:scaleX(0.8760);">Ravenwood Dam</span></div>
<span class="t" style="left:647.40px;top:422.29px;font-size:7.4px;color:#15181c;transform:scaleX(0.8760);">2</span>
<span class="t" style="left:229.50px;top:443.86px;font-size:8.2px;color:#15181c;transform:scaleX(0.8565);">14</span>
<span class="t" style="left:263.00px;top:443.86px;font-size:8.2px;color:#222629;transform:scaleX(0.8734);">items per page</span>
<span class="t" style="left:659.70px;top:444.06px;font-size:8.2px;color:#222629;transform:scaleX(0.8688);">Page 1 of 120</span>
</body></html>
